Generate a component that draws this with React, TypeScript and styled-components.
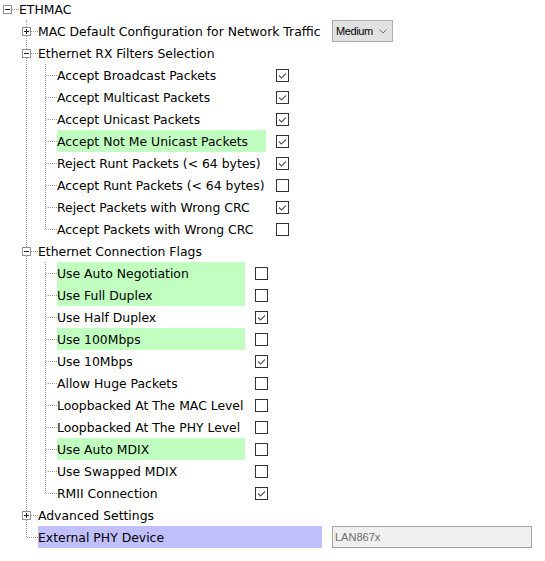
import React from "react";
import styled, { createGlobalStyle } from "styled-components";

const GlobalStyle = createGlobalStyle`
  html, body { margin: 0; padding: 0; background: #ffffff; }
  body {
    font-family: "DejaVu Sans", Verdana, sans-serif;
    font-size: 12.4px;
    color: #000000;
  }
`;

type Value =
  | { kind: "check"; checked: boolean }
  | { kind: "combo"; text: string }
  | { kind: "field"; text: string };

type TreeNode = {
  label: string;
  tone?: "green" | "blue";
  value?: Value;
  expanded?: boolean;
  collapsed?: boolean;
  childLabelWidth?: number;
  children?: TreeNode[];
};

type Line = "none" | "full" | "half";

const DOT = "#a0a0a0";

const Tree = styled.div`
  margin-top: -2px;
`;

const Item = styled.div<{ $line: Line }>`
  background-image: ${(p) =>
    p.$line === "none"
      ? "none"
      : `repeating-linear-gradient(to bottom, ${DOT} 0 1px, transparent 1px 2px)`};
  background-repeat: no-repeat;
  background-position: 7px 0;
  background-size: 1px ${(p) => (p.$line === "full" ? "100%" : "12px")};
`;

const Children = styled.div`
  padding-left: 19px;
`;

const Row = styled.div`
  display: flex;
  align-items: center;
  height: 22px;
`;

const Handle = styled.span<{ $leaf: boolean }>`
  flex: none;
  box-sizing: border-box;
  width: 19px;
  height: 22px;
  padding: 7px 0 0 3px;
  background-image: repeating-linear-gradient(to right, ${DOT} 0 1px, transparent 1px 2px);
  background-repeat: no-repeat;
  background-position: ${(p) => (p.$leaf ? "8px" : "12px")} 11px;
  background-size: ${(p) => (p.$leaf ? "11px" : "7px")} 1px;
`;

const Toggle = styled.span`
  display: block;
  box-sizing: border-box;
  width: 9px;
  height: 9px;
  border: 1px solid #919191;
  background: #ffffff;
  svg { display: block; }
`;

const toneColor = { green: "#c0ffc0", blue: "#c0c0ff" };

const Label = styled.span<{ $width?: number; $tone?: "green" | "blue" }>`
  flex: none;
  box-sizing: border-box;
  width: ${(p) => (p.$width ? `${p.$width}px` : "auto")};
  height: 22px;
  line-height: 23px;
  white-space: nowrap;
  background: ${(p) => (p.$tone ? toneColor[p.$tone] : "transparent")};
`;

const ValueCell = styled.span`
  flex: none;
  margin-left: 10px;
  display: flex;
  align-items: center;
  height: 22px;
`;

const CheckBox = styled.span`
  display: block;
  width: 13px;
  height: 13px;
  svg { display: block; }
`;

const Combo = styled.span`
  box-sizing: border-box;
  width: 61px;
  height: 22px;
  border: 1px solid #adadad;
  background: #e1e1e1;
  display: flex;
  align-items: center;
  justify-content: space-between;
  padding: 0 5px 0 3px;
  font-family: "Liberation Sans", Arial, sans-serif;
  font-size: 11px;
  letter-spacing: -0.4px;
  color: #000000;
  svg { display: block; }
`;

const Field = styled.span`
  box-sizing: border-box;
  width: 200px;
  height: 22px;
  border: 1px solid #a5a5a5;
  background: #f0f0f0;
  display: flex;
  align-items: center;
  padding-left: 2px;
  font-family: "Liberation Sans", Arial, sans-serif;
  font-size: 11px;
  color: #6d6d6d;
`;

function ToggleIcon({ open }: { open: boolean }) {
  return (
    <Toggle>
      <svg width="7" height="7" viewBox="0 0 7 7">
        <rect x="1" y="3" width="5" height="1" fill="#222" />
        {!open && <rect x="3" y="1" width="1" height="5" fill="#222" />}
      </svg>
    </Toggle>
  );
}

function Check({ checked }: { checked: boolean }) {
  return (
    <CheckBox>
      <svg width="13" height="13" viewBox="0 0 13 13">
        <rect x="0.5" y="0.5" width="12" height="12" fill="#fff" stroke="#333" />
        {checked && (
          <polyline
            points="3,6.5 5.5,9 10,4.5"
            fill="none"
            stroke="#5a5a5a"
            strokeWidth="1.1"
          />
        )}
      </svg>
    </CheckBox>
  );
}

function ValueView({ value }: { value: Value }) {
  if (value.kind === "check") return <Check checked={value.checked} />;
  if (value.kind === "combo")
    return (
      <Combo>
        {value.text}
        <svg width="8" height="5" viewBox="0 0 8 5">
          <polyline points="0.5,0.5 4,4 7.5,0.5" fill="none" stroke="#707070" strokeWidth="1" />
        </svg>
      </Combo>
    );
  return <Field>{value.text}</Field>;
}

function TreeItem({ node, line, labelWidth }: { node: TreeNode; line: Line; labelWidth?: number }) {
  const hasToggle = !!node.children || !!node.collapsed;
  const kids = node.children ?? [];
  return (
    <Item $line={line}>
      <Row>
        <Handle $leaf={!hasToggle}>{hasToggle && <ToggleIcon open={!!node.expanded} />}</Handle>
        <Label $width={node.value ? labelWidth : undefined} $tone={node.tone}>
          {node.label}
        </Label>
        {node.value && (
          <ValueCell>
            <ValueView value={node.value} />
          </ValueCell>
        )}
      </Row>
      {node.expanded && kids.length > 0 && (
        <Children>
          {kids.map((c, i) => (
            <TreeItem
              key={c.label}
              node={c}
              line={i === kids.length - 1 ? "half" : "full"}
              labelWidth={node.childLabelWidth}
            />
          ))}
        </Children>
      )}
    </Item>
  );
}

const on = (checked: boolean): Value => ({ kind: "check", checked });

const data: TreeNode = {
  label: "ETHMAC",
  expanded: true,
  childLabelWidth: 284,
  children: [
    {
      label: "MAC Default Configuration for Network Traffic",
      collapsed: true,
      value: { kind: "combo", text: "Medium" },
    },
    {
      label: "Ethernet RX Filters Selection",
      expanded: true,
      childLabelWidth: 209,
      children: [
        { label: "Accept Broadcast Packets", value: on(true) },
        { label: "Accept Multicast Packets", value: on(true) },
        { label: "Accept Unicast Packets", value: on(true) },
        { label: "Accept Not Me Unicast Packets", value: on(true), tone: "green" },
        { label: "Reject Runt Packets (< 64 bytes)", value: on(true) },
        { label: "Accept Runt Packets (< 64 bytes)", value: on(false) },
        { label: "Reject Packets with Wrong CRC", value: on(true) },
        { label: "Accept Packets with Wrong CRC", value: on(false) },
      ],
    },
    {
      label: "Ethernet Connection Flags",
      expanded: true,
      childLabelWidth: 188,
      children: [
        { label: "Use Auto Negotiation", value: on(false), tone: "green" },
        { label: "Use Full Duplex", value: on(false), tone: "green" },
        { label: "Use Half Duplex", value: on(true) },
        { label: "Use 100Mbps", value: on(false), tone: "green" },
        { label: "Use 10Mbps", value: on(true) },
        { label: "Allow Huge Packets", value: on(false) },
        { label: "Loopbacked At The MAC Level", value: on(false) },
        { label: "Loopbacked At The PHY Level", value: on(false) },
        { label: "Use Auto MDIX", value: on(false), tone: "green" },
        { label: "Use Swapped MDIX", value: on(false) },
        { label: "RMII Connection", value: on(true) },
      ],
    },
    { label: "Advanced Settings", collapsed: true, children: [] },
    {
      label: "External PHY Device",
      tone: "blue",
      value: { kind: "field", text: "LAN867x" },
    },
  ],
};

export default function App() {
  return (
    <>
      <GlobalStyle />
      <Tree>
        <TreeItem node={data} line="none" />
      </Tree>
    </>
  );
}
